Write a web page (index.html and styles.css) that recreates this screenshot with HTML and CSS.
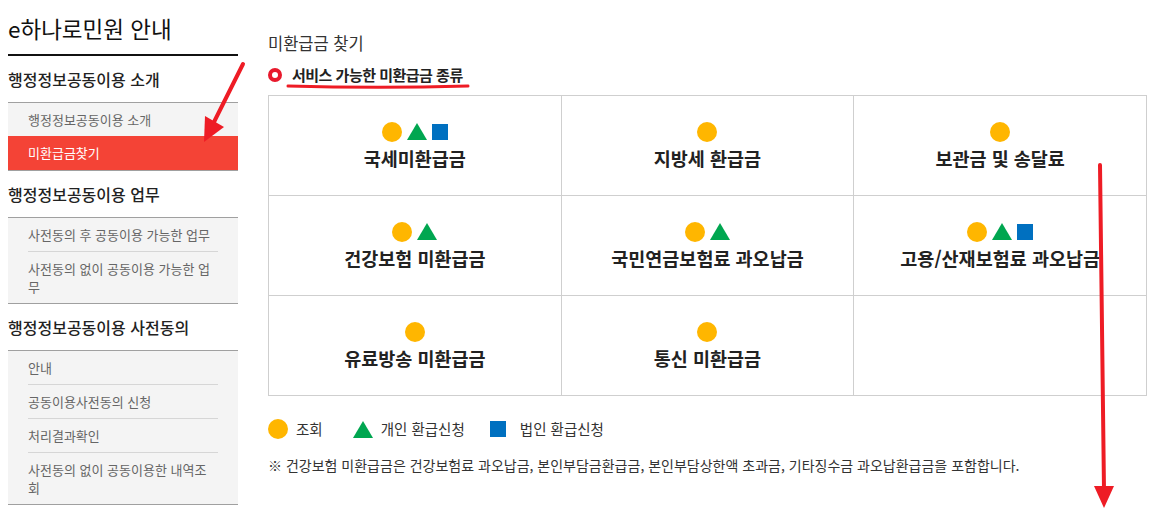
FILE: index.html
```html
<!DOCTYPE html>
<html lang="ko">
<head>
  <meta charset="UTF-8" />
  <meta name="viewport" content="width=device-width, initial-scale=1.0"/>
  <title>미환급금 찾기 - e하나로민원 안내</title>
  <link rel="stylesheet" href="styles.css">
</head>
<body>

  <div class="wrap">

    <!-- Left menu -->
    <aside class="lnb">
      <h2 class="lnb-title">e하나로민원 안내</h2>

      <h3 class="lnb-head">행정정보공동이용 소개</h3>
      <ul class="lnb-sub">
        <li><a href="#">행정정보공동이용 소개</a></li>
        <li class="on"><a href="#">미환급금찾기</a></li>
      </ul>

      <h3 class="lnb-head">행정정보공동이용 업무</h3>
      <ul class="lnb-sub">
        <li><a href="#">사전동의 후 공동이용 가능한 업무</a></li>
        <li><a href="#">사전동의 없이 공동이용 가능한 업무</a></li>
      </ul>

      <h3 class="lnb-head">행정정보공동이용 사전동의</h3>
      <ul class="lnb-sub">
        <li><a href="#">안내</a></li>
        <li><a href="#">공동이용사전동의 신청</a></li>
        <li><a href="#">처리결과확인</a></li>
        <li><a href="#">사전동의 없이 공동이용한 내역조회</a></li>
      </ul>
    </aside>

    <!-- Content -->
    <main class="content">
      <h2 class="page-title">미환급금 찾기</h2>
      <h3 class="sec-title"><span class="ring"></span>서비스 가능한 미환급금 종류</h3>

      <div class="refund-grid">
        <div class="cell">
          <div class="icons"><span class="ico circle"></span><span class="ico tri"></span><span class="ico square"></span></div>
          <strong>국세미환급금</strong>
        </div>
        <div class="cell">
          <div class="icons"><span class="ico circle"></span></div>
          <strong>지방세 환급금</strong>
        </div>
        <div class="cell">
          <div class="icons"><span class="ico circle"></span></div>
          <strong>보관금 및 송달료</strong>
        </div>
        <div class="cell">
          <div class="icons"><span class="ico circle"></span><span class="ico tri"></span></div>
          <strong>건강보험 미환급금</strong>
        </div>
        <div class="cell">
          <div class="icons"><span class="ico circle"></span><span class="ico tri"></span></div>
          <strong>국민연금보험료 과오납금</strong>
        </div>
        <div class="cell">
          <div class="icons"><span class="ico circle"></span><span class="ico tri"></span><span class="ico square"></span></div>
          <strong>고용/산재보험료 과오납금</strong>
        </div>
        <div class="cell">
          <div class="icons"><span class="ico circle"></span></div>
          <strong>유료방송 미환급금</strong>
        </div>
        <div class="cell">
          <div class="icons"><span class="ico circle"></span></div>
          <strong>통신 미환급금</strong>
        </div>
        <div class="cell"></div>
      </div>

      <ul class="legend">
        <li><span class="ico circle"></span>조회</li>
        <li><span class="ico tri"></span>개인 환급신청</li>
        <li class="corp"><span class="ico square"></span>법인 환급신청</li>
      </ul>

      <p class="note">※ 건강보험 미환급금은 건강보험료 과오납금, 본인부담금환급금, 본인부담상한액 초과금, 기타징수금 과오납환급금을 포함합니다.</p>
    </main>

  </div>

  <!-- red marker annotations drawn over the page -->
  <svg class="marks" width="1153" height="512" viewBox="0 0 1153 512">
    <path d="M288 86 Q378 88.5 468 86" fill="none" stroke="#ee1c25" stroke-width="3" stroke-linecap="round"/>
    <line x1="243" y1="64" x2="213" y2="124" stroke="#ee1c25" stroke-width="4" stroke-linecap="round"/>
    <polygon points="205,116 224,127 204,142" fill="#ee1c25"/>
    <line x1="1100" y1="165" x2="1104" y2="490" stroke="#ee1c25" stroke-width="4" stroke-linecap="round"/>
    <polygon points="1094,486 1114,486 1104,508" fill="#ee1c25"/>
  </svg>

</body>
</html>
```

FILE: styles.css
```css
:root {
  --text: #333;
  --line: #cfcfcf;
  --active: #f44336;
  --yellow: #ffb600;
  --green: #00a650;
  --blue: #0070c0;
}

* {
  box-sizing: border-box;
  margin: 0;
  padding: 0;
}

body {
  position: relative;
  min-height: 100vh;
  font-family: "Noto Sans CJK KR", "Noto Sans", sans-serif;
  color: var(--text);
  background: #fff;
}

ul {
  list-style: none;
}

a {
  text-decoration: none;
}

.wrap {
  display: flex;
  gap: 30px;
  padding-left: 8px;
}

/* left menu */
.lnb {
  width: 230px;
  flex: none;
}

.lnb-title {
  font-size: 22.5px;
  line-height: 32px;
  font-weight: 400;
  color: #111;
  padding: 12px 0 10px;
  border-bottom: 2px solid #111;
}

.lnb-head {
  font-size: 16px;
  line-height: 22px;
  font-weight: 500;
  color: #222;
  padding: 12px 0;
}

.lnb-sub {
  background: #f4f4f4;
  border-top: 1px solid #a0a0a0;
  border-bottom: 1px solid #a0a0a0;
}

.lnb-sub a {
  display: block;
  margin: 0 20px;
  padding: 7.5px 3px 7.5px 0;
  font-size: 13px;
  line-height: 18px;
  color: #666;
}

.lnb-sub li + li a {
  border-top: 1px solid #d6d6d6;
}

.lnb-sub li.on a {
  margin: 0;
  padding: 8px 20px;
  border-top: 0;
  background: var(--active);
  color: #fff;
}

/* content */
.content {
  width: 879px;
  flex: none;
}

.page-title {
  margin-top: 32px;
  font-size: 16.5px;
  line-height: 22px;
  font-weight: 400;
  color: var(--text);
}

.sec-title {
  display: flex;
  align-items: center;
  gap: 10px;
  margin: 10px 0 9px;
  font-size: 15px;
  line-height: 22px;
  font-weight: 700;
  letter-spacing: -0.5px;
  color: #222;
}

.ring {
  width: 14px;
  height: 14px;
  border: 4px solid #e8192c;
  border-radius: 50%;
}

.refund-grid {
  display: grid;
  grid-template-columns: repeat(3, 1fr);
  border-top: 1px solid var(--line);
  border-left: 1px solid var(--line);
}

.cell {
  height: 100px;
  display: flex;
  flex-direction: column;
  align-items: center;
  justify-content: center;
  gap: 4px;
  border-right: 1px solid var(--line);
  border-bottom: 1px solid var(--line);
}

.cell strong {
  font-size: 18.5px;
  line-height: 24px;
  font-weight: 700;
  color: #222;
}

.icons {
  display: flex;
  align-items: center;
  gap: 5px;
  height: 20px;
}

.ico {
  display: inline-block;
  flex: none;
}

.ico.circle {
  width: 20px;
  height: 20px;
  border-radius: 50%;
  background: var(--yellow);
}

.ico.tri {
  width: 0;
  height: 0;
  border-left: 10px solid transparent;
  border-right: 10px solid transparent;
  border-bottom: 17px solid var(--green);
}

.ico.square {
  width: 16px;
  height: 16px;
  background: var(--blue);
}

.legend {
  display: flex;
  align-items: center;
  margin-top: 23px;
  font-size: 14.5px;
  line-height: 20px;
  color: var(--text);
}

.legend li {
  display: flex;
  align-items: center;
  gap: 8px;
}

.legend li + li {
  margin-left: 30px;
}

.legend li.corp {
  gap: 14px;
  margin-left: 25px;
}

.note {
  margin-top: 16px;
  font-size: 14px;
  line-height: 20px;
  color: var(--text);
}

/* annotation layer */
.marks {
  position: absolute;
  top: 0;
  left: 0;
  pointer-events: none;
}
```
